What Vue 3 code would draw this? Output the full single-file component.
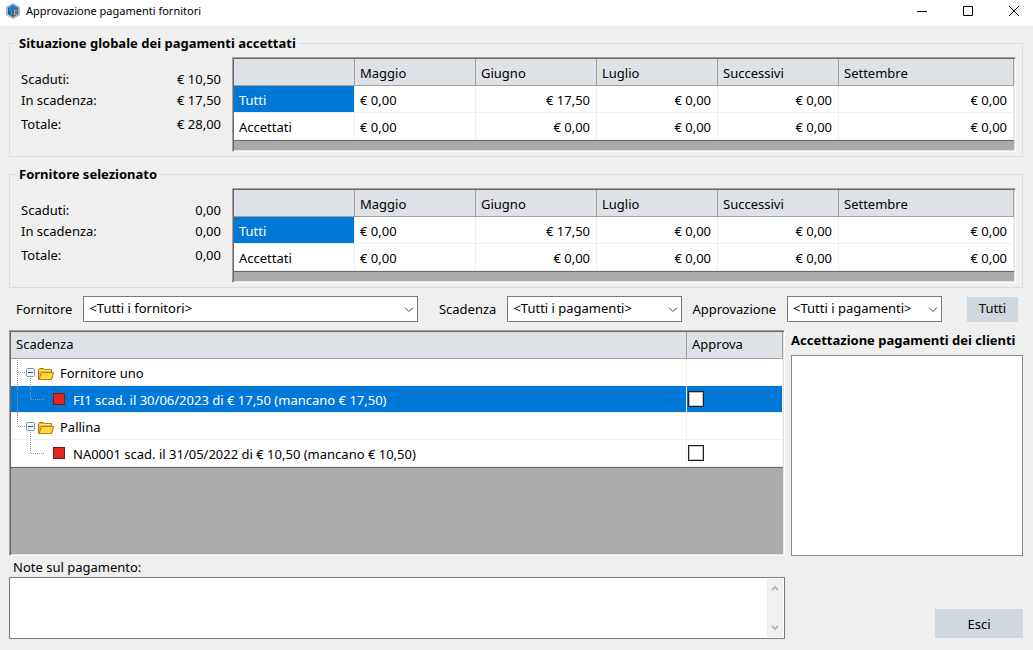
<script setup>
import { ref } from 'vue'

const mesi = ['Maggio', 'Giugno', 'Luglio', 'Successivi', 'Settembre']
const righe = [
  { nome: 'Tutti', valori: ['€ 0,00', '€ 17,50', '€ 0,00', '€ 0,00', '€ 0,00'] },
  { nome: 'Accettati', valori: ['€ 0,00', '€ 0,00', '€ 0,00', '€ 0,00', '€ 0,00'] }
]
const gruppi = [
  {
    titolo: 'Situazione globale dei pagamenti accettati',
    totali: [['Scaduti:', '€ 10,50'], ['In scadenza:', '€ 17,50'], ['Totale:', '€ 28,00']]
  },
  {
    titolo: 'Fornitore selezionato',
    totali: [['Scaduti:', '0,00'], ['In scadenza:', '0,00'], ['Totale:', '0,00']]
  }
]
const albero = ref([
  { tipo: 'fornitore', testo: 'Fornitore uno' },
  { tipo: 'scadenza', testo: 'FI1 scad. il 30/06/2023 di € 17,50 (mancano € 17,50)', selezionata: true, continua: true, approva: false },
  { tipo: 'fornitore', testo: 'Pallina', ultimo: true },
  { tipo: 'scadenza', testo: 'NA0001 scad. il 31/05/2022 di € 10,50 (mancano € 10,50)', approva: false }
])
const note = ref('')
</script>

<template>
  <div class="window">
    <header class="titlebar">
      <svg class="logo" width="14" height="16" viewBox="0 0 14 16" aria-hidden="true">
        <path d="M7 0 L14 4 V12 L7 16 L0 12 V4 Z" fill="#a9b4c6" />
        <path d="M7 2 L12 5 V11 L7 14 L2 11 V5 Z" fill="#17639f" />
        <path d="M7 2 L12 5 L7 8 L2 5 Z" fill="#1b7fd0" />
        <path d="M7 8 L12 5 V11 L7 14 Z" fill="#4b6a7b" />
        <path d="M8 7.5 H11 M8 11 H11 M8.5 7 V12" stroke="#e0a54c" fill="none" />
        <path d="M3 6 L5.5 8 V12" stroke="#4fb4c8" fill="none" />
      </svg>
      <h1>Approvazione pagamenti fornitori</h1>
      <div class="controls">
        <button type="button" aria-label="Riduci a icona">
          <svg width="10" height="10" viewBox="0 0 10 10"><path d="M0 5.5 H10" /></svg>
        </button>
        <button type="button" aria-label="Ingrandisci">
          <svg width="10" height="10" viewBox="0 0 10 10"><path d="M.5 .5 H9.5 V9.5 H.5 Z" /></svg>
        </button>
        <button type="button" aria-label="Chiudi">
          <svg width="10" height="10" viewBox="0 0 10 10"><path d="M0 0 L10 10 M10 0 L0 10" /></svg>
        </button>
      </div>
    </header>

    <main>
      <fieldset v-for="g in gruppi" :key="g.titolo">
        <legend>{{ g.titolo }}</legend>
        <div class="group">
          <dl>
            <div v-for="[k, v] in g.totali" :key="k">
              <dt>{{ k }}</dt>
              <dd>{{ v }}</dd>
            </div>
          </dl>
          <div class="sunken summary">
            <table>
              <colgroup>
                <col v-for="n in 5" :key="n" class="month" />
                <col />
              </colgroup>
              <thead>
                <tr>
                  <th></th>
                  <th v-for="m in mesi" :key="m" scope="col">{{ m }}</th>
                </tr>
              </thead>
              <tbody>
                <tr v-for="(r, i) in righe" :key="r.nome">
                  <th scope="row" :class="{ selected: i === 0 }">{{ r.nome }}</th>
                  <td v-for="(v, j) in r.valori" :key="j" :class="{ num: j > 0 }">{{ v }}</td>
                </tr>
              </tbody>
            </table>
          </div>
        </div>
      </fieldset>

      <form class="filters" @submit.prevent>
        <label for="f-fornitore">Fornitore</label>
        <span class="combo grow">
          <select id="f-fornitore"><option>&lt;Tutti i fornitori&gt;</option></select>
          <svg width="10" height="6" viewBox="0 0 10 6"><path d="M1 .5 L5 4.5 L9 .5" /></svg>
        </span>
        <label for="f-scadenza" class="due">Scadenza</label>
        <span class="combo wide">
          <select id="f-scadenza"><option>&lt;Tutti i pagamenti&gt;</option></select>
          <svg width="10" height="6" viewBox="0 0 10 6"><path d="M1 .5 L5 4.5 L9 .5" /></svg>
        </span>
        <label for="f-approvazione" class="approval">Approvazione</label>
        <span class="combo">
          <select id="f-approvazione"><option>&lt;Tutti i pagamenti&gt;</option></select>
          <svg width="10" height="6" viewBox="0 0 10 6"><path d="M1 .5 L5 4.5 L9 .5" /></svg>
        </span>
        <button type="button" class="flat all">Tutti</button>
      </form>

      <div class="columns">
        <div class="sunken tree">
          <table>
            <colgroup>
              <col />
              <col class="approve" />
            </colgroup>
            <thead>
              <tr>
                <th scope="col">Scadenza</th>
                <th scope="col">Approva</th>
              </tr>
            </thead>
            <tbody>
              <tr v-for="n in albero" :key="n.testo" :class="{ selected: n.selezionata }">
                <td class="node">
                  <div>
                    <svg v-if="n.tipo === 'fornitore'" width="45" height="27" viewBox="0 0 45 27" aria-hidden="true">
                      <path class="dots" :d="n.ultimo ? 'M6.5 0 V13 M7 13.5 H15' : 'M6.5 1 V27 M7 13.5 H15'" />
                      <path class="dots" d="M19.5 19 V27" />
                      <rect x="15.5" y="9.5" width="8" height="8" rx="1" fill="#f4f6f9" stroke="#8595a8" />
                      <path d="M17 13.5 H22" stroke="#0f5cae" />
                      <path d="M27.5 20.5 V10.5 L28.5 9.5 H32.5 L33.5 10.5 H40.5 V13.5 H42.5 L40.5 20.5 Z" fill="#f0b62a" stroke="#b97908" stroke-linejoin="round" />
                      <path d="M28.5 11.5 H39.5" stroke="#fff1a0" />
                      <path d="M30.5 13.5 H42.5 L40.5 20.5 H28 Z" fill="#fbd83f" stroke="#c07f0c" stroke-linejoin="round" />
                    </svg>
                    <svg v-else width="58" height="27" viewBox="0 0 58 27" aria-hidden="true">
                      <path v-if="n.continua" class="dots" d="M6.5 0 V27" />
                      <path class="dots" d="M19.5 0 V13 M20 13.5 H33" />
                      <rect x="42.5" y="7.5" width="11" height="11" fill="#df2620" stroke="#7c1a12" />
                    </svg>
                    <span>{{ n.testo }}</span>
                  </div>
                </td>
                <td class="check">
                  <input v-if="n.tipo === 'scadenza'" v-model="n.approva" type="checkbox" :aria-label="'Approva ' + n.testo" />
                </td>
              </tr>
            </tbody>
          </table>
        </div>

        <section class="clients">
          <h2>Accettazione pagamenti dei clienti</h2>
          <div class="listbox"></div>
        </section>

        <div class="notes">
          <label for="note">Note sul pagamento:</label>
          <div class="memo">
            <textarea id="note" v-model="note"></textarea>
            <div class="scroll">
              <svg width="8" height="6" viewBox="0 0 8 6"><path d="M1 5 L4 2 L7 5" /></svg>
              <svg width="8" height="6" viewBox="0 0 8 6"><path d="M1 1 L4 4 L7 1" /></svg>
            </div>
          </div>
        </div>

        <button type="button" class="flat exit">Esci</button>
      </div>
    </main>
  </div>
</template>

<style>
body { margin: 0; background: #efefef; }
</style>

<style scoped>
.window {
  min-height: 100vh;
  display: flex;
  flex-direction: column;
  background: #efefef;
  color: #000;
  font: 13px/20px "Noto Sans", "Open Sans", sans-serif;
}
* { box-sizing: border-box; }
button, select, textarea { font: inherit; color: inherit; }

.titlebar { display: flex; align-items: center; height: 26px; padding: 0 0 4px 6px; background: #fff; }
.titlebar h1 { flex: 1; margin: 0 0 0 6px; font-size: 11px; font-weight: 400; }
.controls { display: flex; align-self: stretch; }
.controls button { width: 46px; padding: 0 0 0 8px; border: 0; background: none; }
.controls svg { display: block; margin: 0 auto; fill: none; stroke: #000; }

main { flex: 1; display: flex; flex-direction: column; padding: 7px 10px 11px 9px; }

fieldset { min-width: 0; margin: 0 0 7px; padding: 0 6px 4px 11px; border: 1px solid #dcdcdc; }
legend { height: 20px; margin-left: -5px; padding: 0 3px; font-weight: 700; }
.group { display: flex; align-items: flex-start; padding-top: 4px; }
dl { width: 200px; margin: 12px 11px 0 0; }
dl div { display: flex; justify-content: space-between; height: 21px; }
dl div:last-child { margin-top: 3px; }
dd { margin: 0; }

.sunken {
  border: 1px solid;
  border-color: #a0a0a0 #fff #fff #a0a0a0;
  box-shadow: inset 1px 1px #696969, inset -1px -1px #e3e3e3;
  padding: 1px;
  background: #ababab;
}
.summary { flex: 1; height: 95px; }
table { width: 100%; table-layout: fixed; border-collapse: separate; border-spacing: 0; border-bottom: 1px solid #696969; background: #fff; }
.month { width: 121px; }
.approve { width: 96px; }
th, td { height: 27px; padding: 2px 6px 0 5px; border-right: 1px solid #f0f0f0; border-bottom: 1px solid #f0f0f0; font-weight: 400; text-align: left; white-space: nowrap; }
thead th { border-color: #a0a0a0; background: #dee1e6; }
.tree thead th { padding-top: 0; padding-bottom: 2px; }
.num { text-align: right; }
.selected, tr.selected td { background: #0078d7; color: #fff; }

.filters { display: flex; align-items: center; height: 26px; margin: 1px 5px 8px 7px; }
.combo { display: grid; width: 155px; height: 26px; margin-left: 11px; }
.combo select { grid-area: 1 / 1; width: 100%; padding: 0 5px 2px; border: 1px solid #7a7a7a; border-radius: 0; background: #fff; appearance: none; }
.combo svg { grid-area: 1 / 1; align-self: center; justify-self: end; margin: 1px 4px 0 0; fill: none; stroke: #404040; pointer-events: none; }
.combo.grow { flex: 1; }
.combo.wide { width: 175px; }
.due { margin-left: 21px; }
.approval { margin-left: 10px; }
.flat { border: 0; background: #cfd8de; }
.all { width: 51px; height: 25px; margin-left: 25px; padding: 0 0 2px; }

.columns { flex: 1; display: grid; grid-template-columns: minmax(0, 1fr) 232px; grid-template-rows: 1fr auto; column-gap: 6px; }
.tree { min-height: 226px; }
td.node, td.check { padding: 0; }
.node div { display: flex; align-items: flex-start; height: 26px; }
.node svg { flex: none; display: block; overflow: visible; }
.node span { margin-left: 4px; line-height: 28px; }
.dots { fill: none; stroke: #9a9a9a; stroke-dasharray: 1 1; }
.check input { appearance: none; display: block; width: 16px; height: 16px; margin: 0 0 0 1px; border: 1px solid #222; outline: 1px solid #bbb; outline-offset: -2px; background: #fff; }

.clients { display: flex; flex-direction: column; }
.clients h2 { margin: 0 0 5px; font-size: 13px; line-height: 20px; white-space: nowrap; }
.listbox { flex: 1; border: 1px solid #828790; background: #fff; }
.notes label { display: block; padding: 1px 4px 0; }
.memo { display: flex; height: 62px; border: 1px solid #7a7a7a; background: #fff; }
.memo textarea { flex: 1; border: 0; padding: 2px; background: #fff; resize: none; outline: 0; }
.scroll { display: flex; flex-direction: column; align-items: center; justify-content: space-between; width: 16px; margin: 1px; padding: 6px 0; background: #f0f0f0; }
.scroll svg { fill: none; stroke: #b5b5b5; stroke-width: 2; }
.exit { justify-self: end; align-self: end; width: 88px; height: 29px; margin-bottom: 1px; }
</style>
